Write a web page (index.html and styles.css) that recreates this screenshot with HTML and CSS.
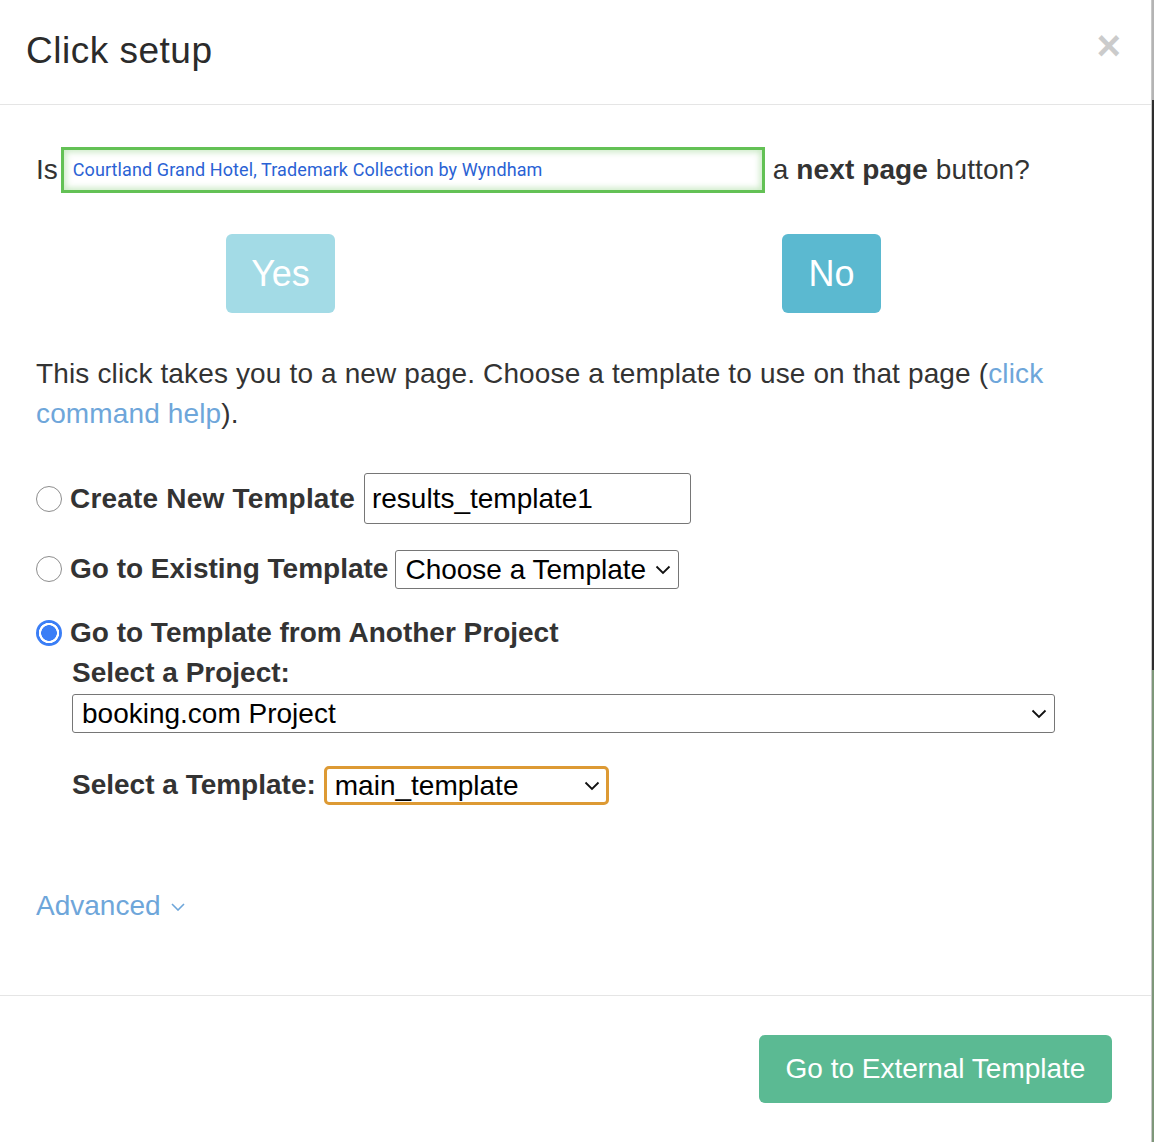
FILE: index.html
```html
<!DOCTYPE html>
<html lang="en">
<head>
<meta charset="utf-8">
<title>Click setup</title>
<link rel="stylesheet" href="styles.css">
</head>
<body>
<div class="page">
  <div class="modal">
    <div class="modal-header">
      <h4 class="modal-title">Click setup</h4>
      <button class="close" type="button" aria-label="Close">×</button>
    </div>
    <div class="modal-body">
      <div class="question">
        <span class="q-is">Is</span>
        <span class="target"><span class="target-text">Courtland Grand Hotel, Trademark Collection by Wyndham</span></span>
        <span class="q-rest">a <b>next page</b> button?</span>
      </div>
      <div class="choice">
        <button class="btn btn-yes" type="button">Yes</button>
        <button class="btn btn-no" type="button">No</button>
      </div>
      <p class="intro">This click takes you to a new page. Choose a template to use on that page (<a href="#" class="link">click command help</a>).</p>

      <div class="option option-new">
        <input type="radio" name="tpl" class="radio" id="opt-new">
        <label for="opt-new" class="opt-label label-new">Create New Template</label>
        <input type="text" class="text-input" value="results_template1">
      </div>

      <div class="option option-existing">
        <input type="radio" name="tpl" class="radio" id="opt-existing">
        <label for="opt-existing" class="opt-label label-existing">Go to Existing Template</label>
        <span class="select select-existing">
          <select><option>Choose a Template</option></select>
          <svg class="chev" viewBox="0 0 16 10" width="16" height="10"><path d="M1.5 1.5 L8 8 L14.5 1.5" fill="none" stroke="#111" stroke-width="1.8"/></svg>
        </span>
      </div>

      <div class="option option-external">
        <input type="radio" name="tpl" class="radio" id="opt-external" checked>
        <label for="opt-external" class="opt-label">Go to Template from Another Project</label>
      </div>
      <div class="sub">
        <div class="sub-label">Select a Project:</div>
        <span class="select select-project">
          <select><option>booking.com Project</option></select>
          <svg class="chev" viewBox="0 0 16 10" width="16" height="10"><path d="M1.5 1.5 L8 8 L14.5 1.5" fill="none" stroke="#111" stroke-width="1.8"/></svg>
        </span>
        <div class="sub-row">
          <span class="sub-label">Select a Template:</span>
          <span class="select select-template">
            <select><option>main_template</option></select>
            <svg class="chev" viewBox="0 0 16 10" width="16" height="10"><path d="M1.5 1.5 L8 8 L14.5 1.5" fill="none" stroke="#111" stroke-width="1.8"/></svg>
          </span>
        </div>
      </div>

      <a href="#" class="link advanced">Advanced <svg class="adv-chev" viewBox="0 0 14 8" width="14" height="8"><path d="M1 1 L7 7 L13 1" fill="none" stroke="#6ea6da" stroke-width="1.6"/></svg></a>
    </div>
    <div class="modal-footer">
      <button class="btn btn-go" type="button">Go to External Template</button>
    </div>
  </div>
  <div class="edge"></div>
</div>
</body>
</html>
```
FILE: styles.css
```css
html, body {
  margin: 0;
  padding: 0;
}
body {
  font-family: "Liberation Sans", Arial, Helvetica, sans-serif;
  font-size: 28px;
  line-height: 40px;
  color: #333;
  background: #fff;
}
.page {
  display: flex;
  height: 1142px;
  overflow: hidden;
}
.modal {
  width: 1151px;
  border-right: 1px solid #c8c8c8;
  display: flex;
  flex-direction: column;
  background: #fff;
}
.edge {
  width: 2px;
  background: linear-gradient(to bottom, #b4b4b4 0, #b4b4b4 100px, #2e2e2e 100px, #2e2e2e 670px, #7e977a 670px);
}

/* header */
.modal-header {
  height: 105px;
  box-sizing: border-box;
  border-bottom: 1px solid #e5e5e5;
  padding: 31px 30px 0 26px;
  display: flex;
  justify-content: space-between;
  align-items: flex-start;
}
.modal-title {
  margin: 0;
  font-size: 37px;
  line-height: 40px;
  letter-spacing: 0.5px;
  font-weight: normal;
  color: #2b2b2b;
}
.close {
  border: 0;
  background: none;
  padding: 0;
  margin-top: 0;
  font-family: "Liberation Sans", Arial, sans-serif;
  font-size: 42px;
  line-height: 30px;
  font-weight: bold;
  color: #000;
  opacity: 0.2;
}

/* body */
.modal-body {
  flex: 1;
  padding: 42px 36px 0 36px;
}
.question {
  display: flex;
  align-items: center;
}
.q-is {
  margin-right: 3px;
}
.target {
  width: 704px;
  height: 46px;
  box-sizing: border-box;
  border: 3px solid #63c155;
  box-shadow: inset 0 0 6px 2px rgba(99, 193, 85, 0.35);
  display: flex;
  align-items: center;
  padding-left: 9px;
  margin-right: 8px;
}
.target-text {
  font-family: Roboto, "Noto Sans", sans-serif;
  font-size: 18px;
  letter-spacing: 0.1px;
  line-height: 20px;
  color: #2a62d4;
}
.q-rest {
  letter-spacing: 0.1px;
}

.choice {
  display: flex;
  padding-left: 190px;
  margin-top: 41px;
}
.btn {
  border: 0;
  font-family: "Liberation Sans", Arial, sans-serif;
  color: #fff;
  border-radius: 6px;
  cursor: pointer;
}
.btn-yes, .btn-no {
  height: 79px;
  font-size: 36px;
  padding: 0;
}
.btn-yes {
  width: 109px;
  background: #a3dbe6;
}
.btn-no {
  width: 99px;
  margin-left: 447px;
  background: #5bb9d0;
}

.intro {
  margin: 41px 0 0 0;
  letter-spacing: 0.14px;
}
.link {
  color: #6ea6da;
  text-decoration: none;
}

.option {
  display: flex;
  align-items: center;
}
.option-new {
  margin-top: 39px;
}
.option-existing {
  margin-top: 25px;
}
.option-external {
  margin-top: 24px;
}
.radio {
  appearance: none;
  -webkit-appearance: none;
  width: 26px;
  height: 26px;
  box-sizing: border-box;
  border: 1px solid #8d8d8d;
  border-radius: 50%;
  background: #fff;
  margin: 0 8px 0 0;
  flex: none;
}
.radio:checked {
  border: 0;
  background: radial-gradient(circle closest-side, #3b7ef6 0, #3b7ef6 58%, #fff 62%, #fff 76%, #3b7ef6 80%);
}
.opt-label {
  font-weight: bold;
  margin-right: 9px;
}
.label-new {
  letter-spacing: 0.2px;
  margin-right: 9px;
}
.label-existing {
  margin-right: 7px;
}
.text-input {
  width: 327px;
  height: 51px;
  box-sizing: border-box;
  border: 1px solid #767676;
  border-radius: 3px;
  padding: 0 7px;
  font-family: "Liberation Sans", Arial, sans-serif;
  font-size: 28px;
  color: #000;
}

.select {
  position: relative;
  display: inline-block;
}
.select select {
  appearance: none;
  -webkit-appearance: none;
  box-sizing: border-box;
  height: 39px;
  border: 1px solid #767676;
  border-radius: 3px;
  background: #fff;
  padding: 0 36px 0 9px;
  font-family: "Liberation Sans", Arial, sans-serif;
  font-size: 28px;
  color: #000;
  display: block;
}
.chev {
  position: absolute;
  right: 8px;
  top: 15px;
}
.select-existing select {
  width: 284px;
  padding-right: 30px;
}
.select-project {
  display: block;
  width: 983px;
  margin-top: 1px;
}
.select-project select {
  width: 983px;
}
.select-template select {
  width: 285px;
  border: 3px solid #dd9a34;
  border-radius: 5px;
  padding-left: 8px;
}
.select-template .chev {
  right: 9px;
}

.sub {
  padding-left: 36px;
}
.sub-label {
  font-weight: bold;
}
.sub-row {
  display: flex;
  align-items: center;
  margin-top: 32px;
}
.sub-row .sub-label {
  margin-right: 8px;
}

.advanced {
  display: inline-flex;
  align-items: center;
  margin-top: 81px;
}
.adv-chev {
  margin-left: 10px;
  margin-top: 2px;
}

/* footer */
.modal-footer {
  height: 147px;
  box-sizing: border-box;
  border-top: 1px solid #e5e5e5;
  padding: 39px 39px 0 0;
  display: flex;
  justify-content: flex-end;
  align-items: flex-start;
}
.btn-go {
  height: 68px;
  width: 353px;
  font-size: 28px;
  padding: 0;
  background: #5bba93;
}
```
